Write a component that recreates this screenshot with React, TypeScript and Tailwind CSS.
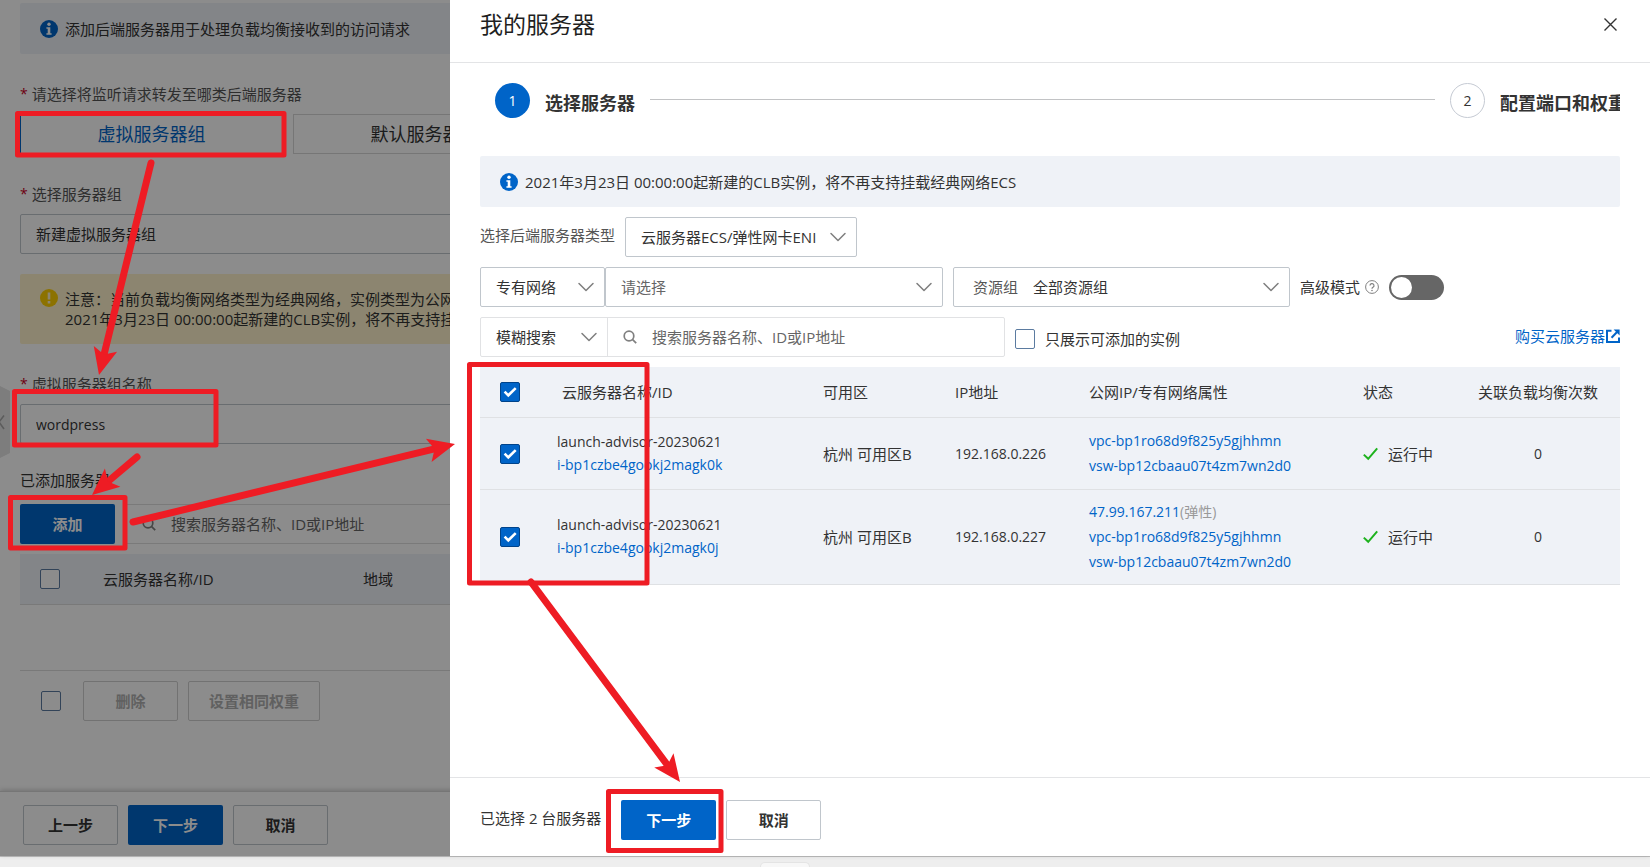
import type { ReactNode } from "react";
import { ChevronDown } from "lucide-react";

type Point = [number, number];

const CONTROL = "h-10 rounded-xs border border-[#c0c6cc] bg-white";
const BUTTON = "h-10 w-[95px] shrink-0 rounded-xs text-[15px] font-bold";

function InfoIcon() {
  return (
    <svg viewBox="0 0 18 18" className="size-[18px] shrink-0" aria-hidden="true">
      <circle cx="9" cy="9" r="9" fill="#0064c8" />
      <circle cx="9" cy="4.2" r="1.7" fill="#fff" />
      <path d="M6.4 7.2h3.9v6h1.3v1.5H6.4v-1.5h1.3V8.7H6.4z" fill="#fff" />
    </svg>
  );
}

function WarnIcon() {
  return (
    <svg viewBox="0 0 18 18" className="size-[18px] shrink-0" aria-hidden="true">
      <circle cx="9" cy="9" r="9" fill="#ffd000" />
      <path d="M7.7 3.4h2.6v7H7.7zM7.7 12h2.6v2.5H7.7z" fill="#fff3cc" />
    </svg>
  );
}

function SearchIcon() {
  return (
    <svg viewBox="0 0 14 14" className="size-[14px] shrink-0" fill="none" stroke="#808080" strokeWidth="1.7" aria-hidden="true">
      <circle cx="6" cy="6" r="4.8" />
      <path d="M9.4 9.4l3.8 3.8" />
    </svg>
  );
}

function ExternalIcon() {
  return (
    <svg viewBox="0 0 14 14" className="size-[14px] shrink-0" fill="none" stroke="#0064c8" strokeWidth="2" aria-hidden="true">
      <path d="M5.5 1.8H1v11.2h12V8.5" />
      <path d="M5.5 8.8l5.8-6" />
      <path d="M7.6 0.6H13.6V6.6z" fill="#0064c8" stroke="none" />
    </svg>
  );
}

function Check({ label, on = false }: { label: string; on?: boolean }) {
  return (
    <span className="grid size-5 shrink-0">
      <input
        type="checkbox"
        aria-label={label}
        defaultChecked={on}
        className="peer col-start-1 row-start-1 size-5 appearance-none rounded-xs border border-[#5b7ba0] bg-white checked:border-[#00438a] checked:bg-[#0064c8]"
      />
      <svg
        viewBox="0 0 20 20"
        className="pointer-events-none invisible col-start-1 row-start-1 size-5 peer-checked:visible"
        fill="none"
        stroke="#fff"
        strokeWidth="2.6"
        aria-hidden="true"
      >
        <path d="M4.6 9.6l3.7 3.7 7.4-7.2" />
      </svg>
    </span>
  );
}

function Picker({ label, value, className, prefix, muted = false }: { label: string; value: string; className: string; prefix?: string; muted?: boolean }) {
  return (
    <label className={`flex items-center ${className}`}>
      {prefix && <span className="pl-[19px] text-[#555555]">{prefix}</span>}
      <span className="grid h-full flex-1 items-center">
        <select
          aria-label={label}
          className={`col-start-1 row-start-1 h-full w-full appearance-none pr-9 pl-[15px] outline-none ${muted ? "text-[#666666]" : "text-[#333333]"}`}
        >
          <option>{value}</option>
        </select>
        <ChevronDown className="pointer-events-none col-start-1 row-start-1 mr-1 size-7 justify-self-end text-[#808080]" strokeWidth={1.3} />
      </span>
    </label>
  );
}

function FieldLabel({ children }: { children: ReactNode }) {
  return (
    <div className="mt-[30px] mb-2.5 flex h-5 items-center gap-1 text-[#555555]">
      <span className="text-sm text-[#c8001e]">*</span>
      {children}
    </div>
  );
}

function Page() {
  return (
    <main className="flex flex-1 flex-col bg-white">
      <div className="px-5 pt-[3px]">
        <div className="flex h-[51px] items-center gap-[7px] rounded-xs bg-[#eff2f8] px-5">
          <InfoIcon />
          添加后端服务器用于处理负载均衡接收到的访问请求
        </div>

        <FieldLabel>请选择将监听请求转发至哪类后端服务器</FieldLabel>
        <div className="flex gap-2.5">
          <button className="h-10 w-[263px] border border-[#0064c8] text-lg text-[#0064c8]">虚拟服务器组</button>
          <button className="h-10 w-[263px] border border-[#d8d8d8] text-lg">默认服务器组</button>
        </div>

        <FieldLabel>选择服务器组</FieldLabel>
        <Picker label="选择服务器组" value="新建虚拟服务器组" className={CONTROL} />

        <div className="mt-5 flex h-[70px] gap-[7px] rounded-xs bg-[#fff3cc] px-5 pt-[15px]">
          <WarnIcon />
          <p className="leading-5">
            注意：当前负载均衡网络类型为经典网络，实例类型为公网
            <br />
            2021年3月23日 00:00:00起新建的CLB实例，将不再支持挂载经典网络ECS
          </p>
        </div>

        <FieldLabel>虚拟服务器组名称</FieldLabel>
        <input aria-label="虚拟服务器组名称" defaultValue="wordpress" className={`w-full px-[15px] text-sm ${CONTROL}`} />

        <h2 className="mt-[26px] mb-[14px] h-5 leading-5">已添加服务器</h2>
        <div className="flex gap-2.5">
          <button className={`bg-[#0064c8] text-white ${BUTTON}`}>添加</button>
          <label className="flex h-10 flex-1 items-center gap-[15px] border border-[#dedede] pl-4">
            <SearchIcon />
            <input
              aria-label="搜索已添加服务器"
              placeholder="搜索服务器名称、ID或IP地址"
              className="flex-1 outline-none placeholder:text-[#666666]"
            />
          </label>
        </div>

        <table className="mt-2.5 w-full table-fixed border-separate border-spacing-0 text-left">
          <colgroup>
            <col className="w-[63px]" />
            <col className="w-[260px]" />
            <col />
          </colgroup>
          <thead>
            <tr className="h-[51px] bg-[#eff2f8]">
              <th className="border-b border-[#dcdcdc] pl-5">
                <Check label="全选已添加服务器" />
              </th>
              <th className="border-b border-[#dcdcdc] px-5 font-normal">云服务器名称/ID</th>
              <th className="border-b border-[#dcdcdc] px-5 font-normal">地域</th>
            </tr>
          </thead>
          <tbody>
            <tr className="h-[66px]">
              <td colSpan={3} className="border-b border-[#dcdcdc]" />
            </tr>
          </tbody>
        </table>

        <div className="mt-2.5 flex items-center gap-2.5 pl-[21px]">
          <Check label="全选" />
          <button className={`ml-3 border border-[#cfcfcf] text-[#b0b0b0] ${BUTTON}`}>删除</button>
          <button className="h-10 w-[132px] rounded-xs border border-[#cfcfcf] font-bold text-[#b0b0b0]">设置相同权重</button>
        </div>
      </div>

      <footer className="mt-auto flex h-[65px] gap-2.5 border-t border-[#d8d8d8] pt-[13px] pl-[23px] shadow-[0_-1px_5px_rgba(0,0,0,0.2)]">
        <button className={`border border-[#c0c6cc] ${BUTTON}`}>上一步</button>
        <button className={`bg-[#0064c8] text-white ${BUTTON}`}>下一步</button>
        <button className={`border border-[#c0c6cc] ${BUTTON}`}>取消</button>
      </footer>
    </main>
  );
}

type Server = { id: string; ip: string; publicIp?: string; height: string };

const servers: Server[] = [
  { id: "i-bp1czbe4gookj2magk0k", ip: "192.168.0.226", height: "h-[72px]" },
  { id: "i-bp1czbe4gookj2magk0j", ip: "192.168.0.227", publicIp: "47.99.167.211", height: "h-[95px]" },
];

function ServerTable() {
  const cell = "border-b border-[#dfe1e4] px-5";
  return (
    <table className="w-full table-fixed border-separate border-spacing-0 bg-[#eff2f7] text-left">
      <colgroup>
        <col className="w-[57px]" />
        <col className="w-[266px]" />
        <col className="w-[132px]" />
        <col className="w-[134px]" />
        <col className="w-[274px]" />
        <col className="w-[113px]" />
        <col />
      </colgroup>
      <thead>
        <tr className="h-[51px] *:font-normal">
          <th className="border-b border-[#dfe1e4] pl-5">
            <Check label="全选服务器" on />
          </th>
          <th className="border-b border-[#dfe1e4] pl-[25px]">云服务器名称/ID</th>
          <th className={cell}>可用区</th>
          <th className={cell}>IP地址</th>
          <th className={cell}>公网IP/专有网络属性</th>
          <th className={cell}>状态</th>
          <th className={`text-center ${cell}`}>关联负载均衡次数</th>
        </tr>
      </thead>
      <tbody>
        {servers.map((s) => (
          <tr key={s.id} className={s.height}>
            <td className="border-b border-[#dfe1e4] pl-5">
              <Check label={s.id} on />
            </td>
            <td className={`pb-0.5 text-sm leading-[23px] ${cell}`}>
              launch-advisor-20230621
              <br />
              <a href="#server" className="text-[#0064c8]">{s.id}</a>
            </td>
            <td className={cell}>杭州 可用区B</td>
            <td className={`text-sm ${cell}`}>{s.ip}</td>
            <td className={`pb-0.5 text-sm leading-[25px] ${cell}`}>
              {s.publicIp && (
                <div>
                  <a href="#eip" className="text-[#0064c8]">{s.publicIp}</a>
                  <span className="text-[#999999]">(弹性)</span>
                </div>
              )}
              <div>
                <a href="#vpc" className="text-[#0064c8]">vpc-bp1ro68d9f825y5gjhhmn</a>
              </div>
              <div>
                <a href="#vsw" className="text-[#0064c8]">vsw-bp12cbaau07t4zm7wn2d0</a>
              </div>
            </td>
            <td className="border-b border-[#dfe1e4] pl-5">
              <span className="flex items-center gap-2.5">
                <svg viewBox="0 0 15 14" className="h-[14px] w-[15px] shrink-0" fill="none" stroke="#1db21d" strokeWidth="2" aria-hidden="true">
                  <path d="M0.8 7.6l4.4 4.2L14.2 1.4" />
                </svg>
                运行中
              </span>
            </td>
            <td className={`text-center text-sm ${cell}`}>0</td>
          </tr>
        ))}
      </tbody>
    </table>
  );
}

function Drawer() {
  return (
    <section aria-label="我的服务器" className="absolute inset-y-0 right-0 left-[450px] flex flex-col bg-white">
      <header className="flex h-[63px] items-center justify-between border-b border-[#e3e4e6] px-[30px] pb-3.5">
        <h1 className="text-[23px] leading-8 text-[#1f1f1f]">我的服务器</h1>
        <button aria-label="关闭" className="px-[3px]">
          <svg viewBox="0 0 13 13" className="size-[13px]" stroke="#333" strokeWidth="1.4" aria-hidden="true">
            <path d="M0.5 0.5l12 12M12.5 0.5l-12 12" />
          </svg>
        </button>
      </header>

      <div className="flex flex-1 flex-col gap-2.5 px-[30px] pt-5">
        <ol className="mb-7 flex items-center gap-[15px] overflow-hidden pl-[15px] whitespace-nowrap">
          <li className="flex shrink-0 items-center gap-[15px]">
            <span className="grid size-[35px] place-items-center rounded-full bg-[#0064c8] text-sm text-white">1</span>
            <span className="pt-1 text-lg leading-6 font-bold">选择服务器</span>
          </li>
          <li aria-hidden="true" className="mb-0.5 h-px flex-1 bg-[#c2c3c5]" />
          <li className="flex w-[170px] shrink-0 items-center gap-[15px]">
            <span className="grid size-[35px] shrink-0 place-items-center rounded-full border border-[#c5cad3] text-sm">2</span>
            <span className="pt-1 text-lg leading-6 font-bold">配置端口和权重</span>
          </li>
        </ol>

        <div className="flex h-[51px] items-center gap-[7px] rounded-xs bg-[#eff2f7] px-5">
          <InfoIcon />
          2021年3月23日 00:00:00起新建的CLB实例，将不再支持挂载经典网络ECS
        </div>

        <div className="flex items-center gap-2.5">
          <span className="pb-1 text-[#555555]">选择后端服务器类型</span>
          <Picker label="选择后端服务器类型" value="云服务器ECS/弹性网卡ENI" className={`w-[232px] ${CONTROL}`} />
        </div>

        <div className="flex items-center gap-2.5">
          <div className="flex">
            <Picker label="网络类型" value="专有网络" className={`w-[125px] ${CONTROL}`} />
            <Picker label="专有网络" value="请选择" muted className={`w-[338px] ${CONTROL}`} />
          </div>
          <Picker label="资源组" prefix="资源组" value="全部资源组" className={`w-[337px] ${CONTROL}`} />
          <span className="flex items-center gap-[5px]">
            <label htmlFor="advanced">高级模式</label>
            <svg viewBox="0 0 14 14" className="size-[14px]" fill="none" stroke="#808080" aria-hidden="true">
              <circle cx="7" cy="7" r="6.4" />
              <path d="M5 5.6a2 2 0 1 1 3 1.7c-.7.4-1 .7-1 1.4" strokeWidth="1.2" />
              <circle cx="7" cy="10.5" r="0.4" />
            </svg>
          </span>
          <span className="flex h-[25px] w-[55px] items-center rounded-full bg-[#666666] p-0.5 has-checked:justify-end has-checked:bg-[#0064c8]">
            <input
              id="advanced"
              type="checkbox"
              role="switch"
              className="size-[21px] appearance-none rounded-full bg-white"
            />
          </span>
        </div>

        <div className="flex items-center">
          <div className="flex h-10 w-[525px] rounded-xs border border-[#e1e2e4]">
            <Picker label="搜索方式" value="模糊搜索" className="w-[127px] border-r border-[#e1e2e4]" />
            <label className="flex flex-1 items-center gap-[15px] pl-[15px]">
              <SearchIcon />
              <input
                aria-label="搜索服务器"
                placeholder="搜索服务器名称、ID或IP地址"
                className="flex-1 outline-none placeholder:text-[#666666]"
              />
            </label>
          </div>
          <label className="ml-2.5 flex items-center gap-2.5 pt-1">
            <Check label="只展示可添加的实例" />
            只展示可添加的实例
          </label>
          <a href="#buy" className="ml-auto flex items-center gap-px pb-0.5 text-[#0064c8]">
            购买云服务器
            <ExternalIcon />
          </a>
        </div>

        <ServerTable />
      </div>

      <footer className="flex h-[79px] items-start gap-2.5 border-t border-[#e3e4e6] px-[30px] pt-[22px]">
        <span className="mr-2.5 leading-9">已选择 2 台服务器</span>
        <button className={`bg-[#0064c8] text-white ${BUTTON}`}>下一步</button>
        <button className={`border border-[#c0c6cc] ${BUTTON}`}>取消</button>
      </footer>
    </section>
  );
}

const boxes = [
  { x: 17.5, y: 113.5, w: 266.5, h: 41.5 },
  { x: 14.5, y: 391.5, w: 201.5, h: 53.5 },
  { x: 10.5, y: 497.5, w: 114.5, h: 50.5 },
  { x: 469.5, y: 364.5, w: 177.5, h: 218.5 },
  { x: 608.5, y: 791.5, w: 112.5, h: 59 },
];

const arrows: { from: Point; tip: Point }[] = [
  { from: [151, 163], tip: [99, 375] },
  { from: [137, 457], tip: [92, 495] },
  { from: [133, 522], tip: [455, 444] },
  { from: [531, 582], tip: [680, 782] },
];

function arrowHead(from: Point, tip: Point) {
  const len = Math.hypot(tip[0] - from[0], tip[1] - from[1]);
  const ux = (tip[0] - from[0]) / len;
  const uy = (tip[1] - from[1]) / len;
  const at = (back: number, side: number) => `${tip[0] - ux * back - uy * side},${tip[1] - uy * back + ux * side}`;
  return { points: [at(0, 0), at(27, 12), at(21, 0), at(27, -12)].join(" "), ex: tip[0] - ux * 20, ey: tip[1] - uy * 20 };
}

function Annotations() {
  return (
    <svg width="1650" height="867" className="pointer-events-none absolute top-0 left-0" fill="none" stroke="#ee1c24" aria-hidden="true">
      {boxes.map((b) => (
        <rect key={b.x} x={b.x} y={b.y} width={b.w} height={b.h} strokeWidth="5" strokeLinejoin="round" />
      ))}
      {arrows.map(({ from, tip }) => {
        const head = arrowHead(from, tip);
        return (
          <g key={from[0]}>
            <line x1={from[0]} y1={from[1]} x2={head.ex} y2={head.ey} strokeWidth="7" strokeLinecap="round" />
            <polygon points={head.points} fill="#ee1c24" stroke="none" />
          </g>
        );
      })}
    </svg>
  );
}

export default function App() {
  return (
    <div className="relative flex min-h-screen flex-col overflow-hidden bg-[#eeeeee] font-['Open_Sans','Noto_Sans_CJK_SC',sans-serif] text-[15px] leading-5 text-[#333333]">
      <div className="relative flex flex-1 flex-col">
        <Page />
        <svg viewBox="0 0 10 72" className="absolute top-[386px] left-0 h-[72px] w-2.5" fill="none" aria-hidden="true">
          <path d="M0 0l10 5v62l-10 5z" fill="#e4e4e4" />
          <path d="M4 29.5l-5 6.5 5 7" stroke="#a8a8a8" strokeWidth="1.6" />
        </svg>
        <div className="absolute inset-0 bg-black/45" />
        <Drawer />
      </div>
      <div className="flex h-[11px] items-end border-t border-[#bdbdbd] pl-[760px]">
        <span className="h-[5px] w-[50px] rounded-t-md border border-b-0 border-[#e4e4e4] bg-[#f7f7f7]" />
      </div>
      <Annotations />
    </div>
  );
}
